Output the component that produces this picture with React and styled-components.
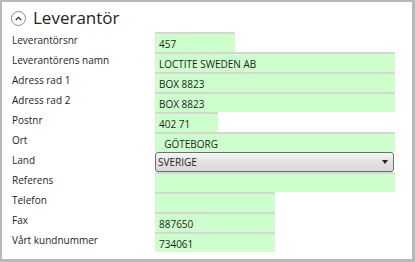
import React from 'react'
import styled, { createGlobalStyle } from 'styled-components'

const GlobalStyle = createGlobalStyle`
  html, body {
    margin: 0;
    padding: 0;
    background: #fff;
  }
`

const rows = [
  { label: 'Leverantörsnr', value: '457', width: 80 },
  { label: 'Leverantörens namn', value: 'LOCTITE SWEDEN AB', width: 240 },
  { label: 'Adress rad 1', value: 'BOX 8823', width: 240 },
  { label: 'Adress rad 2', value: 'BOX 8823', width: 240 },
  { label: 'Postnr', value: '402 71', width: 63 },
  { label: 'Ort', value: '  GÖTEBORG', width: 240 },
  { label: 'Land', value: 'SVERIGE', width: 240, combo: true },
  { label: 'Referens', value: '', width: 240 },
  { label: 'Telefon', value: '', width: 120 },
  { label: 'Fax', value: '887650', width: 120 },
  { label: 'Vårt kundnummer', value: '734061', width: 120 },
]

const Frame = styled.div`
  box-sizing: border-box;
  width: 415px;
  height: 262px;
  border-style: solid;
  border-color: #b8b8b8;
  border-width: 2px 3px 3px 2px;
  background: #fff;
  font-family: 'Open Sans', 'Noto Sans', sans-serif;
  color: #1e1e1e;
`

const Header = styled.div`
  display: flex;
  align-items: center;
  gap: 7px;
  height: 30px;
  padding: 2px 0 0 9px;
  box-sizing: border-box;
`

const Expander = styled.div`
  box-sizing: border-box;
  width: 15px;
  height: 15px;
  border: 1px solid #8a8a8a;
  border-radius: 50%;
  display: flex;
  align-items: center;
  justify-content: center;
`

const Title = styled.h2`
  margin: 0;
  font-size: 17px;
  font-weight: 400;
  color: #222;
  line-height: 20px;
`

const Form = styled.div`
  display: grid;
  grid-template-columns: 143px 1fr;
  grid-auto-rows: 20px;
  padding-left: 10px;
`

const Label = styled.div`
  font-size: 10px;
  line-height: 14px;
  padding-top: 1px;
  white-space: nowrap;
`

const Field = styled.div`
  box-sizing: border-box;
  width: ${(p) => p.$width}px;
  height: 20px;
  background: #ccffcc;
  border-top: 2px solid #d6d6d6;
  font-size: 10px;
  line-height: 15px;
  padding: 3px 0 0 4px;
  white-space: pre;
`

const Combo = styled.div`
  box-sizing: border-box;
  width: ${(p) => p.$width - 1}px;
  height: 20px;
  border: 1px solid #6e6e6e;
  border-radius: 3px;
  background: linear-gradient(#f6f6f6, #e2e2e2 50%, #d8d8d8);
  display: flex;
  align-items: center;
  justify-content: space-between;
  font-size: 10px;
  padding: 0 5px 0 2px;
`

const Arrow = styled.span`
  width: 0;
  height: 0;
  border-left: 3px solid transparent;
  border-right: 3px solid transparent;
  border-top: 4px solid #222;
`

const App = () => (
  <Frame>
    <GlobalStyle />
    <Header>
      <Expander>
        <svg width="7" height="5" viewBox="0 0 7 5">
          <path d="M0.8 4 L3.5 1.3 L6.2 4" fill="none" stroke="#333" strokeWidth="1.3" />
        </svg>
      </Expander>
      <Title>Leverantör</Title>
    </Header>
    <Form>
      {rows.map((r) => (
        <React.Fragment key={r.label}>
          <Label>{r.label}</Label>
          {r.combo ? (
            <Combo $width={r.width}>
              {r.value}
              <Arrow />
            </Combo>
          ) : (
            <Field $width={r.width}>{r.value}</Field>
          )}
        </React.Fragment>
      ))}
    </Form>
  </Frame>
)

export default App
